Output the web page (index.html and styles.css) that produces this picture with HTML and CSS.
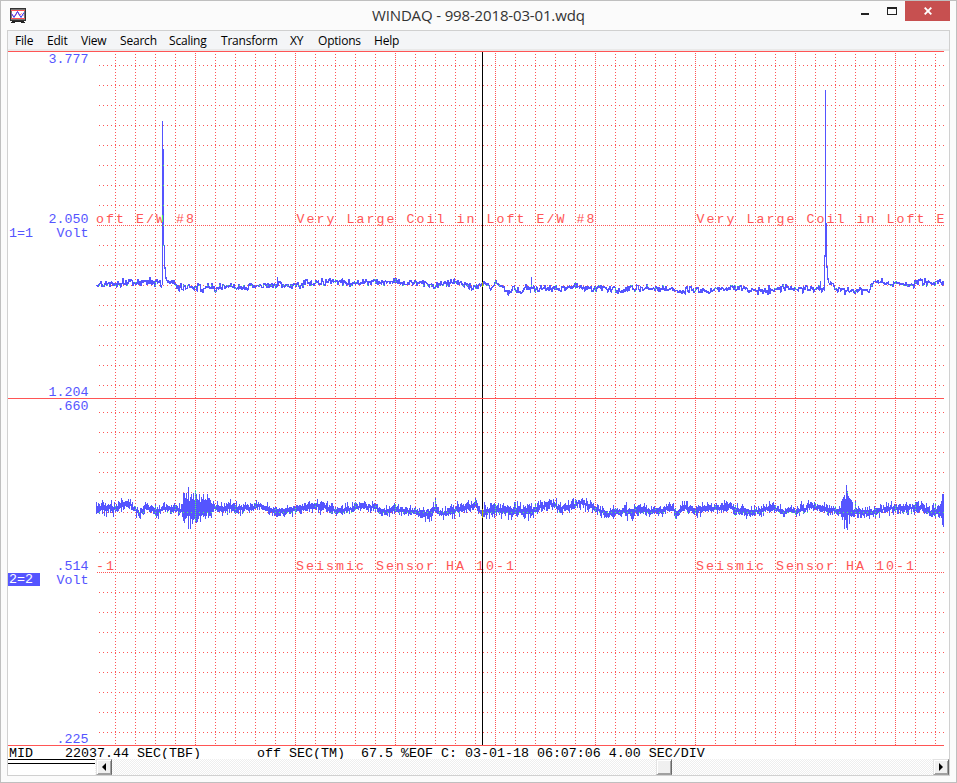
FILE: index.html
```html
<!DOCTYPE html>
<html lang="en">
<head>
  <meta charset="UTF-8">
  <title>WINDAQ - 998-2018-03-01.wdq</title>
  <link rel="stylesheet" href="styles.css">
</head>
<body>
  <div class="window">
    <div class="titlebar">
      <svg class="app-icon" width="16" height="16" viewBox="0 0 16 16" shape-rendering="crispEdges">
        <path d="M0 0h16v13H0z" fill="#333"/>
        <path d="M1 1h14v11H1z" fill="#777"/>
        <path d="M2 2h12v9H2z" fill="#fff"/>
        <path d="M1 2.5h14M1 10.5h14" stroke="#f55"/>
        <path d="M1.5 5.5l2 3 2-1 2-4 2 4 2-2 2 2" fill="none" stroke="#f77" shape-rendering="auto"/>
        <path d="M1.5 5.5l2.5 4 3.500-6 3.500 6 3-5" fill="none" stroke="#33f" shape-rendering="auto"/>
        <path d="M2 13h12v1H2zM1 14h4v1H1zM11 14h4v1h-4z" fill="#222"/>
      </svg>
      <div class="title"><span id="title">WINDAQ - 998-2018-03-01.wdq</span></div>
      <div class="controls">
        <div class="minimize"></div>
        <div class="maximize"></div>
        <div class="close">
          <svg width="8" height="8" viewBox="0 0 8 8"><path d="M.7 .7l6.6 6.6M7.3 .7L.7 7.3" stroke="#fff" stroke-width="1.9"/></svg>
        </div>
      </div>
    </div>

    <div class="client">
      <div class="menu">
        <span>File</span><span>Edit</span><span>View</span><span>Search</span><span>Scaling</span><span>Transform</span><span>XY</span><span>Options</span><span>Help</span>
      </div>

      <div class="panel">
        <div class="labels">
          <div>3.777</div>
          <div>2.050<div class="unit"><span class="channel">1=1</span>Volt</div></div>
          <div>1.204</div>
        </div>
        <svg class="plot" id="plot1" width="848" height="346"></svg>
      </div>
      <div class="panel">
        <div class="labels">
          <div>.660</div>
          <div>.514<div class="unit"><span class="channel selected">2=2</span>Volt</div></div>
          <div>.225</div>
        </div>
        <svg class="plot" id="plot2" width="848" height="346"></svg>
      </div>

      <div class="status">MID    22037.44 SEC(TBF)       off SEC(TM)  67.5 %EOF C: 03-01-18 06:07:06 4.00 SEC/DIV</div>

      <div class="bottom">
        <div class="gauge"></div>
        <div class="scrollbar">
          <div class="btn"><svg width="4" height="8"><path d="M4 0v8L0 4z"/></svg></div>
          <div class="btn thumb"></div>
          <div class="btn"><svg width="4" height="8"><path d="M0 0v8l4-4z"/></svg></div>
        </div>
      </div>
    </div>
  </div>
  <script src="script.js"></script>
</body>
</html>
```
FILE: styles.css
```css
body {
  margin: 0;
  background: #fbfbfb;
  overflow: hidden;
}

.window {
  box-sizing: border-box;
  width: 957px;
  height: 783px;
  border: 1px solid #bfbfbf;
  background: #fbfbfb;
}

.titlebar {
  display: flex;
  height: 29px;
  padding: 0 6px 0 9px;
}

.app-icon {
  margin-top: 7px;
}

.title {
  flex: 1;
  padding-left: 346px;
  font: 15px/29px "Open Sans", sans-serif;
  color: #333;
  white-space: nowrap;
}

.title span {
  letter-spacing: -0.15px;
}

.controls {
  display: flex;
  align-items: flex-start;
}

.minimize {
  width: 8px;
  height: 2px;
  margin: 12px 18px 0 0;
  background: #222;
}

.maximize {
  box-sizing: border-box;
  width: 10px;
  height: 8px;
  margin: 6px 8px 0 0;
  border: 1px solid #222;
  border-top-width: 2px;
}

.close {
  display: flex;
  align-items: center;
  justify-content: center;
  width: 45px;
  height: 20px;
  background: #c75050;
}

.client {
  width: 941px;
  margin-left: 6px;
  border: 1px solid #d0d0d0;
  background: #fff;
}

.menu {
  display: grid;
  grid-template-columns: 32px 34px 39px 49px 52px 69px 28px 56px auto;
  height: 18px;
  padding-left: 7px;
  border-bottom: 2px solid #e9e9e9;
  background: #f4f5f7;
  font: 12px/20px "Open Sans", sans-serif;
  letter-spacing: -0.2px;
  color: #000;
}

.panel {
  display: flex;
  width: 936px;
  height: 346px;
  border-top: 1px solid #ff5555;
}

.labels {
  display: grid;
  grid-template-rows: 160px 173px 13px;
  width: 80.5px;
  padding-right: 7.5px;
  font: 13.33px/15px "Liberation Mono", monospace;
  color: #5555ff;
  text-align: right;
}

.unit {
  display: flex;
  justify-content: space-between;
  line-height: 14px;
}

.channel {
  width: 31px;
  padding-left: 1px;
  text-align: left;
}

.selected {
  height: 13px;
  margin-top: -1px;
  line-height: 14px;
  background: #5555ff;
  color: #fff;
}

.plot {
  display: block;
  font: 13.33px "Liberation Mono", monospace;
  letter-spacing: 2px;
}

.grid {
  stroke: #ff5555;
}

.note {
  fill: #ff5555;
  white-space: pre;
}

.trace {
  stroke: #5555ff;
}

.overlap {
  stroke: #55ff55;
}

.cursor {
  stroke: #000;
}

.cursor-hit {
  stroke: #aaaa00;
}

.status {
  height: 13px;
  width: 935px;
  padding-left: 1px;
  border-top: 1px solid #ff5555;
  font: 13.33px/15px "Liberation Mono", monospace;
  white-space: pre;
  color: #000;
}

.bottom {
  display: flex;
  height: 16px;
}

.gauge {
  width: 88px;
  height: 3px;
  border-top: 1px solid #000;
  border-bottom: 1px solid #000;
}

.scrollbar {
  display: flex;
  flex: 1;
  justify-content: space-between;
  padding-left: 1px;
  background: repeating-conic-gradient(#eeeeee 0 25%, #ffffff 0 50%) 0 0 / 2px 2px;
}

.btn {
  box-sizing: border-box;
  display: flex;
  align-items: center;
  justify-content: center;
  width: 16px;
  height: 16px;
  border: 1px solid #e3e3e3;
  border-right: 1px solid #696969;
  border-bottom: 1px solid #a0a0a0;
  box-shadow: inset 1px 1px #fff, inset -1px -1px #a0a0a0;
  background: #f0f0f0;
}

.thumb {
  margin-left: 544px;
  margin-right: 261px;
}
```
FILE: script.js
```js
// baseline points: x, y, noise
const coil = [
  [0,233,2],[4,230,2],[14,231,2],[24,231,2],[34,229,2],[44,230,2],[50,228,2],[59,230,2],[65,231,2],
  [72,229,1],[78,230,1],[80,235,2],[89,234,2],[102,235,2],[104,237,2],[114,234,2],[119,236,2],
  [126,233,2],[134,235,2],[154,234,2],[164,233,2],[179,233,2],[189,232,2],[199,234,2],[206,233,2],
  [209,230,2],[224,230,2],[234,229,2],[249,230,2],[259,232,2],[269,229,2],[289,230,2],[299,228,2],
  [314,230,2],[324,230,2],[336,234,2],[349,230,2],[362,230,2],[366,232,2],[379,236,2],[386,231,1],
  [391,229,2],[394,236,2],[399,230,1],[404,233,1],[411,240,2],[416,234,2],[424,240,1],[429,236,2],
  [449,235,2],[459,237,2],[469,235,2],[479,234,2],[489,236,2],[509,236,2],[524,239,2],[534,235,2],
  [544,236,2],[554,236,2],[569,237,2],[584,238,2],[594,236,2],[604,238,2],[619,237,2],[629,236,2],
  [639,235,2],[649,237,2],[664,238,2],[674,237,2],[689,236,2],[704,236,2],[714,237,2],[728,236,2],
  [732,231,1],[736,232,1],[740,237,1],[749,238,2],[759,238,2],[766,239,2],[772,238,2],[774,232,1],
  [784,230,2],[794,231,2],[804,230,2],[814,233,2],[824,229,2],[839,230,2],[847,231,2]
];
const coilSpikes = {
  66: [69, 232], 67: [97, 193], 68: [193, 216], 69: [215, 226], 70: [225, 228],
  181: [225, 234], 435: [225, 236], 479: [230, 236], 724: [229, 237],
  728: [203, 238], 729: [38, 204], 730: [171, 215], 731: [214, 227], 732: [226, 230]
};

const seismic = [
  [0,108,7],[4,108,6],[9,108,6],[19,109,4],[29,104,4],[34,104,4],[39,111,4],[44,114,5],[49,107,4],[54,109,4],
  [59,112,5],[69,109,4],[84,110,4],[87,109,13],[99,108,16],[103,108,13],[112,108,11],[116,108,7],
  [126,110,5],[134,106,5],[139,109,5],[149,109,4],[164,106,4],[174,111,4],[189,112,3],[204,109,4],
  [214,107,5],[224,107,5],[234,109,4],[244,111,4],[254,110,4],[259,107,4],[269,107,3],[279,108,3],
  [286,113,4],[299,109,4],[309,112,4],[319,112,4],[332,116,5],[339,107,7],[344,114,4],[354,112,5],
  [364,109,6],[379,105,4],[384,113,3],[389,111,7],[404,111,5],[419,111,7],[434,112,7],[444,108,5],
  [454,104,5],[464,109,5],[474,107,5],[484,103,5],[494,107,4],[504,111,4],[511,115,4],[519,112,5],
  [534,112,5],[544,109,7],[554,111,4],[564,112,4],[574,107,4],[579,114,4],[589,108,5],[599,112,5],
  [609,109,4],[624,109,4],[634,107,4],[644,112,5],[654,112,4],[664,111,4],[674,107,5],[679,109,4],
  [687,113,4],[694,109,4],[699,113,4],[714,107,4],[724,109,4],[734,110,3],[744,112,4],[746,110,12],
  [754,109,14],[757,111,7],[769,113,6],[779,112,5],[789,109,4],[799,108,5],[809,109,5],[819,108,6],
  [829,109,5],[834,113,5],[843,112,6],[847,111,12]
];
const seismicSpikes = {
  88: [94, 123], 92: [88, 129], 94: [98, 129], 101: [100, 122], 111: [95, 113],
  339: [99, 112], 748: [96, 129], 750: [86, 128], 751: [92, 130], 753: [99, 124],
  846: [95, 125], 847: [95, 127]
};

// small repeatable noise source
let seed = 7;
function rand() {
  seed = (seed * 16807) % 2147483647;
  return seed / 2147483647;
}

function at(points, x) {
  let i = 0;
  while (i < points.length - 2 && points[i + 1][0] <= x) i++;
  const a = points[i], b = points[i + 1];
  const t = (x - a[0]) / (b[0] - a[0]);
  return [a[1] + (b[1] - a[1]) * t, a[2] + (b[2] - a[2]) * t];
}

function isGridDot(x, y) {
  if ((y - 13) % 20 === 0 && x % 4 === 3) return true;
  if ((x - 99) % 100 === 0) return y % 2 === 1;
  return (x - 19) % 20 === 0 && y % 3 === 2;
}

function line(cls, x1, y1, x2, y2, dash) {
  return `<line class="${cls}" x1="${x1}" y1="${y1}" x2="${x2}" y2="${y2}" ${dash ? `stroke-dasharray="${dash}"` : ''} shape-rendering="crispEdges"/>`;
}

function draw(id, points, spikes, notes, dense) {
  let out = '';
  for (let y = 13; y < 346; y += 20) {
    out += y === 173 ? line('grid', 1, y + .5, 848, y + .5, '1 1') : line('grid', 3, y + .5, 848, y + .5, '1 3');
  }
  for (let x = 19; x < 848; x += 20) {
    out += x % 100 === 99 ? line('grid', x + .5, 1, x + .5, 346, '1 1') : line('grid', x + .5, 2, x + .5, 346, '1 2');
  }
  for (const [x, text] of notes) {
    out += `<text class="note" x="${x}" y="171">${text}</text>`;
  }

  let trace = '', overlap = '';
  let last = points[0][1];
  for (let x = 0; x < 848; x++) {
    const [mid, amp] = at(points, x);
    let top, bottom;
    if (spikes[x]) {
      [top, bottom] = spikes[x];
      last = mid;
    } else if (dense) {
      const drift = (rand() - .5) * 3;
      const burst = amp > 7;
      const up = burst ? .4 + .6 * rand() : .1 + 1.5 * rand() * rand();
      const down = burst ? .4 + .6 * rand() : .1 + 1.5 * rand() * rand();
      top = Math.round(mid + drift - amp * up - 1);
      bottom = Math.round(mid + drift + amp * down + 1);
    } else {
      const next = mid + (rand() + rand() - 1) * amp * 2.1;
      top = Math.round(Math.min(last, next) - .5 * rand());
      bottom = Math.round(Math.max(last, next) + .9 * rand());
      last = next;
    }
    trace += `M${x + .5} ${top}V${bottom + 1}`;
    for (let y = top; y <= bottom; y++) {
      if (isGridDot(x, y)) overlap += `M${x + .5} ${y}v1`;
    }
  }
  out += line('cursor', 386.5, 0, 386.5, 346);
  out += `<path class="trace" shape-rendering="crispEdges" d="${trace}"/>`;
  out += `<path class="overlap" shape-rendering="crispEdges" d="${overlap}"/>`;
  out += dense ? line('cursor-hit', 386.5, 110, 386.5, 119) : line('cursor-hit', 386.5, 230, 386.5, 235) + line('overlap', 66.5, 163, 66.5, 170);
  document.getElementById(id).innerHTML = out;
}

const coilName = 'Very Large Coil in Loft E/W #8';
const seismicName = 'Seismic Sensor HA 10-1';
draw('plot1', coil, coilSpikes, [[0, coilName.slice(-10)], [200.5, coilName], [600.5, coilName.slice(0, 25)]], false);
draw('plot2', seismic, seismicSpikes, [[0, seismicName.slice(-2)], [200, seismicName], [600, seismicName]], true);
```
